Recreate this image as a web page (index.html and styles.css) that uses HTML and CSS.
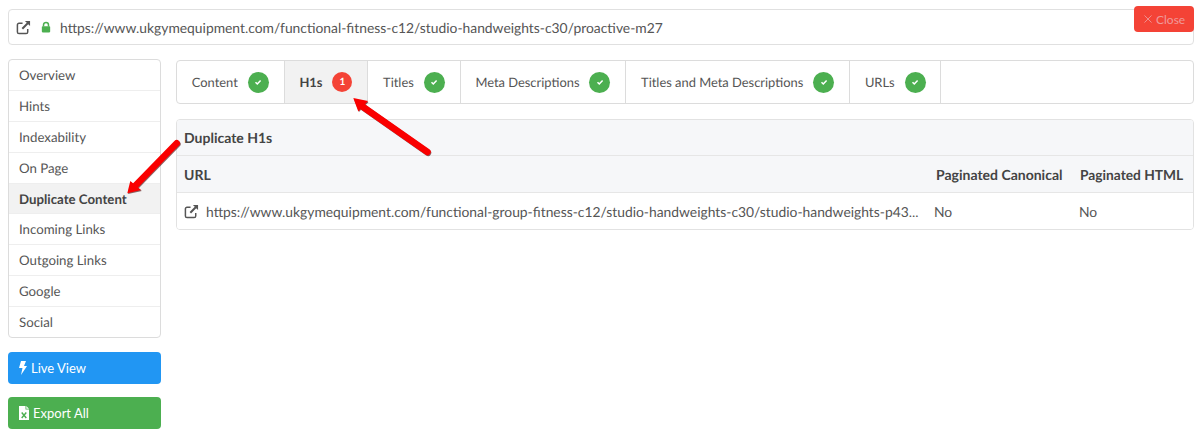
FILE: index.html
```html
<!DOCTYPE html>
<html lang="en">
<head>
<meta charset="utf-8">
<title>Duplicate H1s</title>
<link rel="stylesheet" href="styles.css">
</head>
<body>
<div class="urlbar">
  <svg class="ext" viewBox="0 0 16 16"><path d="M7 3.500H3.200A1.700 1.700 0 0 0 1.500 5.200v7.600a1.700 1.700 0 0 0 1.700 1.700h7.600a1.700 1.700 0 0 0 1.700-1.700V9.500" fill="none" stroke="#555" stroke-width="1.600"/><path d="M9.500 1H15v5.500l-2-2-5.500 5.500-1.500-1.500L11.500 3z" fill="#555"/></svg>
  <svg class="lock" viewBox="0 0 12 14"><path d="M3 6.500V4.500a3 3 0 0 1 6 0v2" fill="none" stroke="#4caf50" stroke-width="1.800"/><rect x="1" y="6" width="10" height="7.500" rx="1" fill="#4caf50"/></svg>
  <span class="urltext">https://www.ukgymequipment.com/functional-fitness-c12/studio-handweights-c30/proactive-m27</span>
</div>
<button class="close"><svg class="x" viewBox="0 0 9 9"><path d="M.5.500l8 8M8.500.500l-8 8" stroke="#ef9a9a" stroke-width="1"/></svg>Close</button>
<div class="main">
  <aside class="side">
    <nav class="menu">
      <a>Overview</a><a>Hints</a><a>Indexability</a><a>On Page</a><a class="on">Duplicate Content</a><a>Incoming Links</a><a>Outgoing Links</a><a>Google</a><a>Social</a>
    </nav>
    <button class="btn blue"><svg class="bolt" viewBox="0 0 8 14"><path d="M2 0h5L5 5h3L2 14l1.500-7H0z" fill="#fff"/></svg>Live View</button>
    <button class="btn green"><svg class="xls" viewBox="0 0 10 14"><path d="M0 0h6.500v3.500H10V14H0z" fill="#fff"/><path d="M7.300 0L10 2.700H7.300z" fill="#fff"/><path d="M2.700 6.500l4.600 5.500M7.300 6.500L2.700 12" stroke="#4caf50" stroke-width="1.400"/></svg>Export All</button>
  </aside>
  <section class="content">
    <div class="tabs">
      <div class="tab">Content<span class="ok"><svg viewBox="0 0 10 10"><path d="M2.500 5.200l1.800 1.800 3.300-3.600" fill="none" stroke="#fff" stroke-width="1.500"/></svg></span></div>
      <div class="tab act">H1s<span class="bad">1</span></div>
      <div class="tab">Titles<span class="ok"><svg viewBox="0 0 10 10"><path d="M2.500 5.200l1.800 1.800 3.300-3.600" fill="none" stroke="#fff" stroke-width="1.500"/></svg></span></div>
      <div class="tab">Meta Descriptions<span class="ok"><svg viewBox="0 0 10 10"><path d="M2.500 5.200l1.800 1.800 3.300-3.600" fill="none" stroke="#fff" stroke-width="1.500"/></svg></span></div>
      <div class="tab">Titles and Meta Descriptions<span class="ok"><svg viewBox="0 0 10 10"><path d="M2.500 5.200l1.800 1.800 3.300-3.600" fill="none" stroke="#fff" stroke-width="1.500"/></svg></span></div>
      <div class="tab">URLs<span class="ok"><svg viewBox="0 0 10 10"><path d="M2.500 5.200l1.800 1.800 3.300-3.600" fill="none" stroke="#fff" stroke-width="1.500"/></svg></span></div>
    </div>
    <div class="panel">
      <div class="phead">Duplicate H1s</div>
      <div class="row thead"><div class="c1">URL</div><div class="c2">Paginated Canonical</div><div class="c3">Paginated HTML</div></div>
      <div class="row tbody">
        <div class="c1 link"><svg class="ext" viewBox="0 0 16 16"><path d="M7 3.500H3.200A1.700 1.700 0 0 0 1.500 5.200v7.600a1.700 1.700 0 0 0 1.700 1.700h7.600a1.700 1.700 0 0 0 1.700-1.700V9.500" fill="none" stroke="#555" stroke-width="1.600"/><path d="M9.500 1H15v5.500l-2-2-5.500 5.500-1.500-1.500L11.500 3z" fill="#555"/></svg><span class="trunc">https://www.ukgymequipment.com/functional-group-fitness-c12/studio-handweights-c30/studio-handweights-p43...</span></div>
        <div class="c2">No</div><div class="c3">No</div>
      </div>
    </div>
  </section>
</div>
<svg class="arrows" viewBox="0 0 1200 438">
  <g class="shadow">
    <path d="M353.800 99L368.500 102 359 112z" fill="#400"/>
    <path d="M428 152.800L362 106.500" stroke="#400" stroke-width="6.500" stroke-linecap="round"/>
    <path d="M128 194L131 182 141.800 191z" fill="#400"/>
    <path d="M177.400 144L134.500 188" stroke="#400" stroke-width="6.500" stroke-linecap="round"/>
  </g>
  <path d="M353.300 98L368 101 358.300 111.500z" fill="#fa0000"/>
  <path d="M427.500 152L361 105.500" stroke="#fa0000" stroke-width="6.500" stroke-linecap="round"/>
  <path d="M127.300 193.300L130.300 181 141 190z" fill="#fa0000"/>
  <path d="M176.700 143.300L134 187" stroke="#fa0000" stroke-width="6.500" stroke-linecap="round"/>
</svg>
</body>
</html>
```
FILE: styles.css
```css
* { box-sizing: border-box; }
html, body { margin: 0; padding: 0; }
body {
  width: 1200px;
  height: 438px;
  overflow: hidden;
  position: relative;
  background: #fff;
  padding: 9px 6px 0 8px;
  font-family: Lato, "Liberation Sans", sans-serif;
  font-size: 14px;
  color: #555;
  text-rendering: geometricPrecision;
}
.urlbar {
  height: 36px;
  display: flex;
  align-items: center;
  background: #fff;
  border: 1px solid #e0e0e0;
  border-radius: 4px;
  padding-left: 7px;
}
.ext { width: 15px; height: 15px; flex: none; }
.lock { width: 10px; height: 12px; margin-left: 10px; flex: none; }
.urltext { margin-left: 9px; font-size: 13.85px; color: #555; white-space: nowrap; }
.close {
  position: absolute;
  left: 1134px;
  top: 6px;
  width: 60px;
  height: 26px;
  padding: 0 0 0 10px;
  display: flex;
  align-items: center;
  background: #f44336;
  border: 0;
  border-radius: 4px;
  color: #ef9a9a;
  font: 12px Lato, "Liberation Sans", sans-serif;
}
.x { width: 8px; height: 8px; margin-right: 4px; }
.main { display: flex; margin-top: 14px; }
.side { width: 153px; flex: none; margin-right: 15px; }
.menu {
  display: flex;
  flex-direction: column;
  border: 1px solid #dcdcdc;
  border-radius: 4px;
  height: 279px;
  overflow: hidden;
  font-size: 13.25px;
}
.menu a {
  height: 30.9px;
  line-height: 31px;
  padding-left: 10px;
  border-bottom: 1px solid #eee;
  white-space: nowrap;
  flex: none;
}
.menu a:last-child { border-bottom: 0; }
.menu a.on { background: #f2f2f2; font-weight: 700; color: #444; }
.btn {
  display: flex;
  align-items: center;
  width: 153px;
  height: 32px;
  border: 0;
  border-radius: 4px;
  color: #fff;
  padding: 0 0 0 11px;
  font: 13px Lato, "Liberation Sans", sans-serif;
}
.blue { background: #2196f3; margin-top: 14px; }
.green { background: #4caf50; margin-top: 13px; }
.bolt { width: 8px; height: 14px; margin-right: 4px; }
.xls { width: 10px; height: 14px; margin-right: 4px; }
.content { flex: 1; min-width: 0; margin-top: 1px; }
.tabs {
  display: flex;
  height: 44px;
  border: 1px solid #dcdcdc;
  border-radius: 4px;
  overflow: hidden;
  font-size: 12.9px;
}
.tab {
  display: flex;
  align-items: center;
  gap: 10px;
  padding: 0 14.8px;
  border-right: 1px solid #dcdcdc;
  white-space: nowrap;
}
.tab.act { background: #f2f2f2; font-weight: 700; color: #444; }
.ok, .bad {
  width: 21px;
  height: 21px;
  border-radius: 50%;
  display: flex;
  align-items: center;
  justify-content: center;
  flex: none;
}
.ok { background: #4caf50; }
.ok svg { width: 10px; height: 10px; }
.bad { background: #f44336; width: 20px; height: 20px; color: #fff; font-size: 10px; }
.panel {
  margin-top: 15px;
  border: 1px solid #e2e2e2;
  border-radius: 4px;
  height: 111px;
  overflow: hidden;
}
.phead {
  height: 36px;
  line-height: 36px;
  padding-left: 7px;
  background: #f6f7f9;
  border-bottom: 1px solid #e6e6e6;
  font-weight: 700;
  color: #444;
}
.row { display: flex; align-items: center; }
.thead {
  height: 37px;
  background: #f6f7f9;
  border-bottom: 1px solid #e6e6e6;
  font-weight: 700;
  color: #444;
}
.tbody { height: 36px; background: #fff; font-size: 13.85px; }
.c1 { width: 757px; flex: none; padding-left: 7px; white-space: nowrap; }
.c2 { width: 145px; flex: none; white-space: nowrap; }
.c3 { flex: 1; white-space: nowrap; }
.thead .c2 { padding-left: 2px; }
.thead .c3 { padding-left: 1px; font-size: 13.75px; }
.link { display: flex; align-items: center; gap: 7px; }
.trunc { overflow: hidden; white-space: nowrap; }
.shadow { opacity: 0.6; }
.arrows { position: absolute; left: 0; top: 0; width: 1200px; height: 438px; pointer-events: none; }
```
